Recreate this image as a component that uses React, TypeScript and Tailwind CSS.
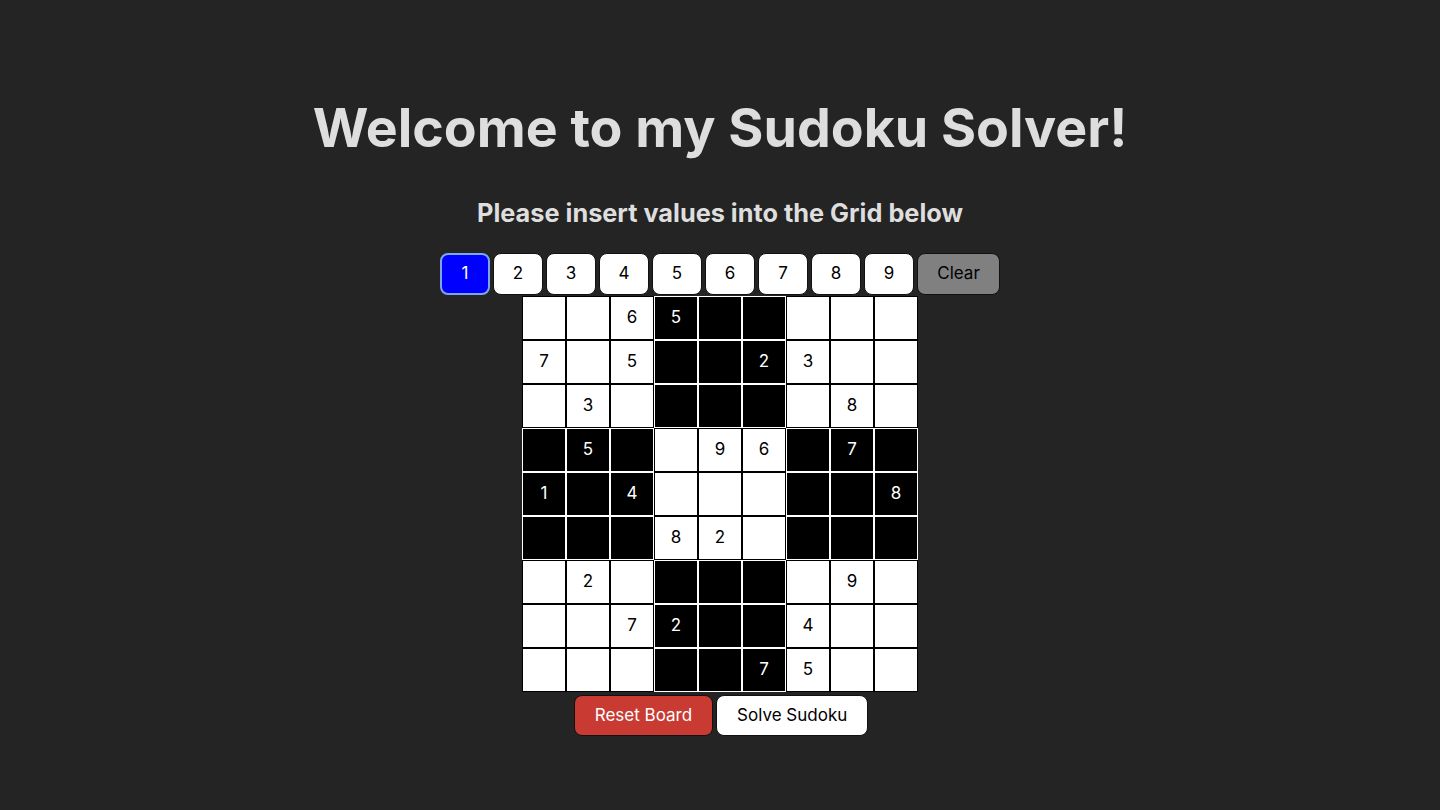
const board: (number | null)[][] = [
  [null, null, 6, 5, null, null, null, null, null],
  [7, null, 5, null, null, 2, 3, null, null],
  [null, 3, null, null, null, null, null, 8, null],
  [null, 5, null, null, 9, 6, null, 7, null],
  [1, null, 4, null, null, null, null, null, 8],
  [null, null, null, 8, 2, null, null, null, null],
  [null, 2, null, null, null, null, null, 9, null],
  [null, null, 7, 2, null, null, 4, null, null],
  [null, null, null, null, null, 7, 5, null, null],
]

// boxes alternate: odd box index is dark
const isDark = (r: number, c: number) => (Math.floor(r / 3) + Math.floor(c / 3)) % 2 === 1

function App() {
  const selected = 1

  return (
    <div className="min-h-screen bg-[#242424] text-[#dedede] font-['Inter',sans-serif] flex flex-col items-center pt-[98px]">
      <h1 className="text-[53.7px] font-bold leading-[1.1]">Welcome to my Sudoku Solver!</h1>

      <h2 className="text-[25.3px] font-bold leading-9 mt-[38px]">Please insert values into the Grid below</h2>

      <div className="flex gap-[3px] mt-[22px]">
        {[1, 2, 3, 4, 5, 6, 7, 8, 9].map((n) =>
          n === selected ? (
            <button key={n} className="w-[50px] h-[42px] rounded-lg border-2 border-[#7ea6ee] bg-[#0000ff] text-white text-[17px]">
              {n}
            </button>
          ) : (
            <button key={n} className="w-[50px] h-[42px] rounded-lg border border-[#111] bg-white text-black text-[17px]">
              {n}
            </button>
          )
        )}
        <button className="w-[83px] h-[42px] rounded-lg border border-[#111] bg-[#808080] text-black text-[17px]">Clear</button>
      </div>

      <div className="grid grid-cols-9 mt-px">
        {board.map((row, r) =>
          row.map((v, c) =>
            isDark(r, c) ? (
              <div key={`${r}-${c}`} className="w-[44px] h-[44px] border border-white bg-black text-white flex items-center justify-center text-[17px]">
                {v ?? ''}
              </div>
            ) : (
              <div key={`${r}-${c}`} className="w-[44px] h-[44px] border border-black bg-white text-black flex items-center justify-center text-[17px]">
                {v ?? ''}
              </div>
            )
          )
        )}
      </div>

      <div className="flex gap-[3px] mt-[3px] pl-[2px]">
        <button className="h-[41px] px-5 rounded-lg border border-[#111] bg-[#c83a32] text-white text-[17px]">Reset Board</button>
        <button className="h-[41px] px-5 rounded-lg border border-[#111] bg-white text-black text-[17px]">Solve Sudoku</button>
      </div>
    </div>
  )
}

export default App
